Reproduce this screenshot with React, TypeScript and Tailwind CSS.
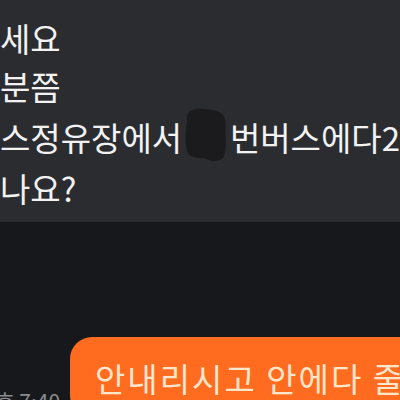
const font = { fontFamily: '"Noto Sans CJK KR", "Noto Sans", sans-serif' };

function Redact() {
  return (
    <svg width="46" height="58" viewBox="0 0 44 56" className="inline-block align-middle -mt-1 mx-[2px]">
      <path
        d="M6 4 C12 0 22 2 30 3 C38 4 43 10 42 20 C41 30 44 40 40 50 C36 56 28 55 22 52 C14 50 6 52 3 44 C0 34 2 24 3 14 C3 9 3 6 6 4 Z"
        fill="#1b1b1d"
      />
    </svg>
  );
}

export default function App() {
  return (
    <div className="w-[400px] h-[400px] overflow-hidden bg-[#17181c] flex flex-col" style={font}>
      <div className="bg-[#2b2c30] pt-[14px] h-[222px] shrink-0 text-[33px] leading-[48px] text-[#f2f2f2] whitespace-nowrap">
        <div>세요</div>
        <div>분쯤</div>
        <div className="flex items-center">
          <span>스정유장에서</span>
          <Redact />
          <span>번버스에다2</span>
        </div>
        <div>나요?</div>
      </div>
      <div className="flex-1 flex items-start pt-[115px] gap-[10px]">
        <div className="mt-[50px] ml-[-24px] text-[21px] leading-[28px] text-[#8a8b8f] whitespace-nowrap w-[84px] shrink-0">
          오후 7:40
        </div>
        <div className="flex-1 bg-[#ff6b1f] rounded-l-[22px] pl-[25px] pt-[21px] h-[80px] text-[33px] tracking-[2px] leading-[40px] text-[#fde6cc] whitespace-nowrap overflow-hidden">
          안내리시고 안에다 줄
        </div>
      </div>
    </div>
  );
}
